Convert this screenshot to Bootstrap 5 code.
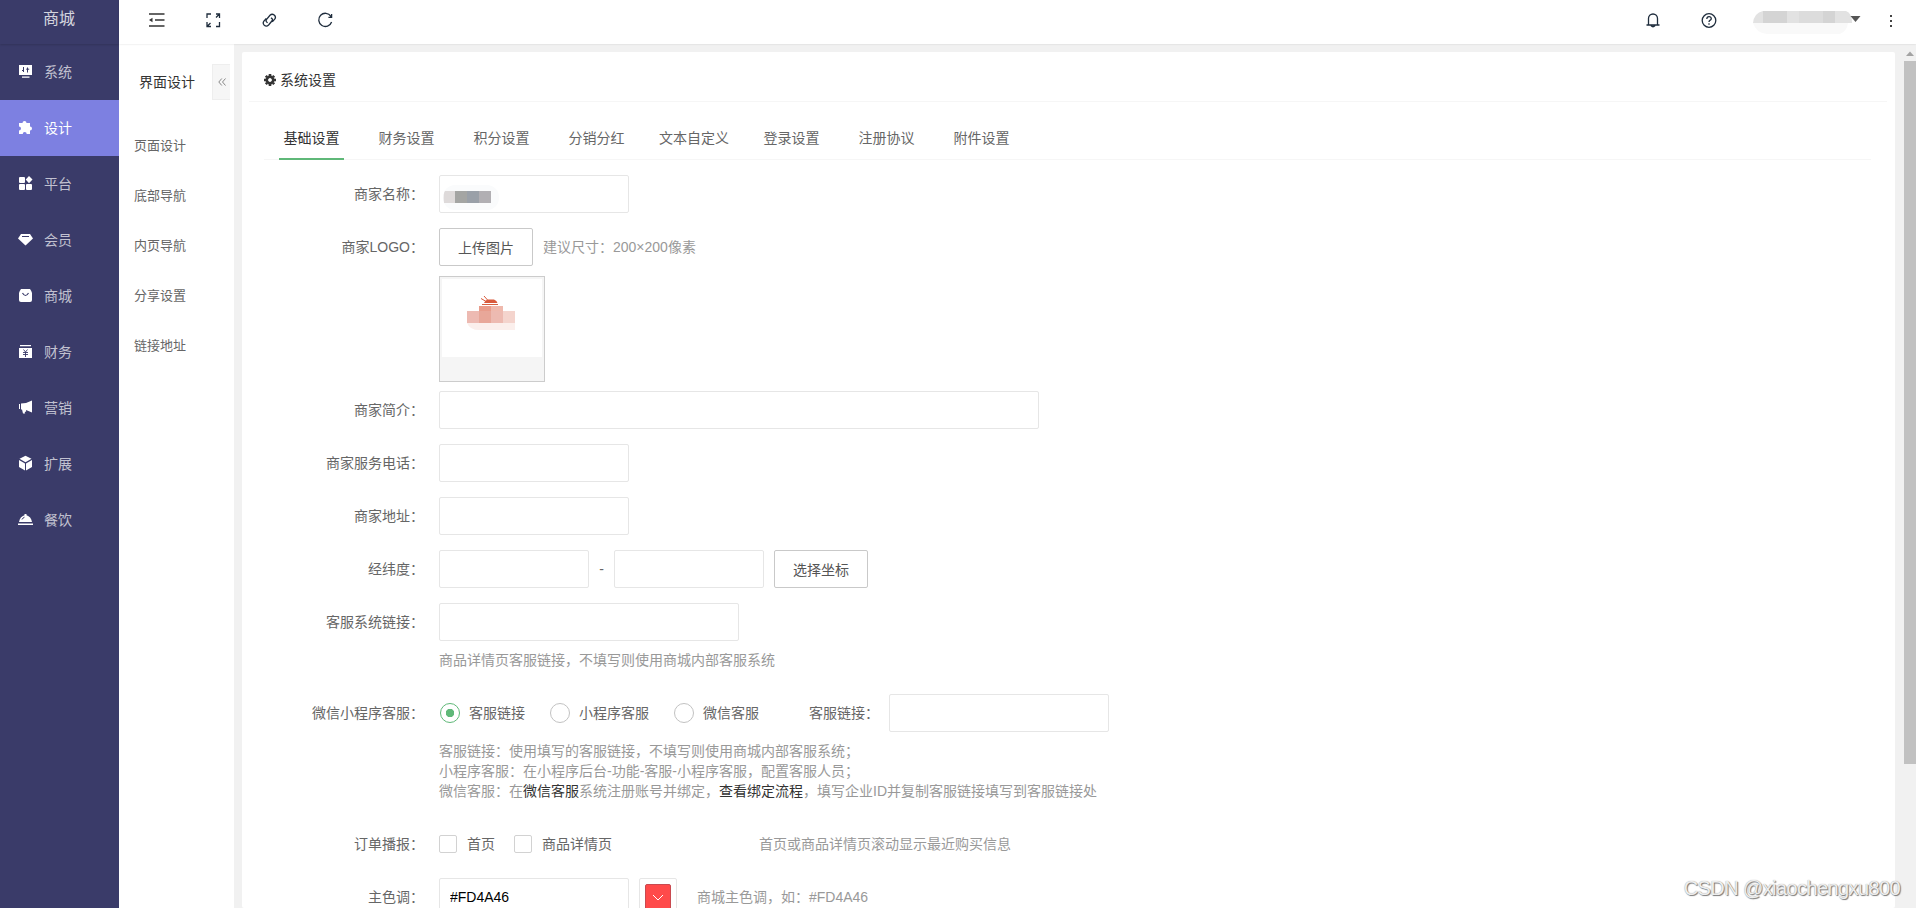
<!DOCTYPE html>
<html lang="zh-CN">
<head>
<meta charset="utf-8">
<title>系统设置</title>
<link rel="stylesheet" href="https://cdn.jsdelivr.net/npm/bootstrap@5.3.0/dist/css/bootstrap.min.css">
<style>
body{font:14px/20px "Liberation Sans","Noto Sans CJK SC",sans-serif;color:#666;background:#f1f1f1;height:908px;overflow:hidden}
.side{width:119px;background:#3a3b69;color:rgba(255,255,255,.7)}
.brand{height:44px;font-size:16px;line-height:38px;color:rgba(255,255,255,.8);box-shadow:0 1px 2px rgba(0,0,0,.15);text-align:center;padding-right:1px}
.side .nav-link{height:56px;padding:0 0 1px 18px;color:inherit;gap:10px}
.side .nav-link.active{background:#7d80e1;color:#fff}
.side svg{width:16px;height:16px;margin-top:-1px;fill:#fff;color:#3a3b69}
.topbar{height:45px;background:#fff;box-shadow:0 0 2px rgba(0,0,0,.14);padding:0 19px 15px 30px;z-index:2}
.topbar svg{display:block;fill:none;stroke:#1f2d3d;stroke-width:1.3}
.tools{gap:40px}
.sub{width:115px;background:#fff;padding-top:20px;font-size:13px}
.sub-head{height:36px;padding-left:20px;font-size:14px;color:#333}
.fold{width:18px;height:36px;background:#f6f6f6;border:1px solid #eee;border-right:0}
.sub .nav{margin-top:21px}
.sub .nav-link{height:50px;padding:0 0 0 15px;color:#666}
.gutter{padding:8px 9px 0 8px}
.panel{background:#fff;border-radius:2px;overflow:hidden}
.panel-head{height:50px;margin:0 8px 0 7px;padding:6px 0 0 15px;border-bottom:1px solid #f6f6f6;color:#333;gap:4px}
.tabs{height:41px;margin:17px 24px 15px 22px;border-bottom:1px solid #f6f6f6}
.tabs .nav-link{height:41px;padding:9px 0 0;margin:0 15px;min-width:65px;color:#666;text-align:center;border-bottom:2px solid transparent}
.tabs .nav-link.active{color:#333;border-color:#5fb878}
.line{height:38px;margin-bottom:15px}
.lab{width:197px;padding-right:15px;text-align:right;flex:none;height:38px;line-height:38px}
.inp{height:38px;border:1px solid #e6e6e6;border-radius:2px;padding:0 10px;font-size:14px;color:#000;width:190px;flex:none;background:#fff}
.w150{width:150px}.w220{width:220px}.w300{width:300px}.w600{width:600px}
.pick{width:94px;height:38px;border:1px solid #c9c9c9;border-radius:2px;padding:2px 0 0;font-size:14px;color:#555;flex:none}
.tip{color:#999}
.indent{margin-left:197px;padding:9px 0 24px}
.thumb{width:106px;height:106px;border:1px solid #ccc;background:#f5f5f5;padding:2px;margin:-5px 0 9px 197px}
.thumb svg{display:block;background:#fff}
.dot{width:20px;height:20px;border:1.5px solid #c2c2c2;border-radius:50%;margin:0 9px 0 25px}
.dot.on{margin-left:1px;border-color:#5fb878;background:radial-gradient(circle,#5fb878 0 4px,transparent 4.5px)}
.box{width:18px;height:18px;border:1px solid #d2d2d2;border-radius:2px;margin-right:10px}
.hl{color:#333}
.inner-lab{width:130px;text-align:right;padding-right:10px}
.swatch{width:38px;height:38px;border:1px solid #e6e6e6;border-radius:2px;padding:5px;margin:0 20px 0 10px}
.swatch svg{display:block;background:#ff4a4a;border:1px solid #c84a50;border-radius:2px}
.rail{width:12px;background:#f1f1f1;padding-top:7px}
.rail div{height:703px;margin-top:5px;background:#c1c1c1}
.stamp{right:16px;bottom:8px;font:20px/24px "Liberation Sans",sans-serif;letter-spacing:-.6px;color:#eee;text-shadow:1px 1px 1px #777,0 0 1px #999;z-index:5}
</style>
</head>
<body class="d-flex">
<aside class="side flex-shrink-0">
  <div class="brand">商城</div>
  <nav class="nav flex-column flex-nowrap">
    <a class="nav-link d-flex align-items-center"><svg viewBox="0 0 16 16"><path d="M1 2h13v10H1zM4 13.500h7.500v1.200H4z"/><path d="M5.500 4v5M4 7.500h2M9.500 4.500v5M8.200 6.200h3" stroke="currentColor" fill="none"/></svg>系统</a>
    <a class="nav-link d-flex align-items-center active"><svg viewBox="0 0 16 16"><path d="M1 4h3.500a2 2 0 1 1 4 0H12v3.500a2 2 0 1 1 0 4V15H8.700a2 2 0 0 0-4 0H1v-3.500a2 2 0 0 0 0-4z"/></svg>设计</a>
    <a class="nav-link d-flex align-items-center"><svg viewBox="0 0 16 16"><rect x="1" y="2" width="6" height="6" rx="1"/><path d="m11 1 3.500 3.500L11 8.200 7.700 4.600z"/><rect x="1" y="9" width="6" height="6" rx="1"/><rect x="8" y="9" width="6" height="6" rx="1"/></svg>平台</a>
    <a class="nav-link d-flex align-items-center"><svg viewBox="0 0 16 16"><path d="M3 3h9l3 4.500-7.500 7L0 7.500z"/><path d="M4 5.500h7" stroke="currentColor"/></svg>会员</a>
    <a class="nav-link d-flex align-items-center"><svg viewBox="0 0 16 16"><path d="M3 2h9q1.500 2 2 4v7q0 2-2 2H3q-2 0-2-2V6q.5-2 2-4z"/><path d="M4.500 6q3 5 6 0" stroke="currentColor" fill="none" stroke-width="1.200"/></svg>商城</a>
    <a class="nav-link d-flex align-items-center"><svg viewBox="0 0 16 16"><path d="M2 2h11v1.200H2zM1 5h13v10H1z"/><path d="m5.500 6.500 2 2.500 2-2.500M7.500 9v5M5 9.500h5M5 11.500h5" stroke="currentColor" fill="none" stroke-width=".9"/></svg>财务</a>
    <a class="nav-link d-flex align-items-center"><svg viewBox="0 0 16 16"><path d="M1 5h1v5H1zM3 4.500 8 4l6-2.500v12L8 11l.2 1.500-1.500.5.5 1.500H5L4 10.500H3z"/></svg>营销</a>
    <a class="nav-link d-flex align-items-center"><svg viewBox="0 0 16 16"><path d="m7.500.8 6 3-6 3.400-6-3.400zM1 5l6 3.500v7l-6-3.500zM14 5 8 8.500v7l6-3.500z"/></svg>扩展</a>
    <a class="nav-link d-flex align-items-center"><svg viewBox="0 0 16 16"><path d="M6.500 3h2v1.200Q13 5.500 14 11H1Q2 5.500 6.500 4.200zM0 12.500h15V14H0z"/><path d="M4 8.500q.8-1.700 2.500-2.300" stroke="currentColor" fill="none"/></svg>餐饮</a>
  </nav>
</aside>
<div class="flex-grow-1 d-flex flex-column">
  <header class="topbar d-flex align-items-end justify-content-between position-relative">
    <div class="tools d-flex align-items-center">
      <svg width="16" height="18" viewBox="0 0 16 18"><path d="M0 3h15.500M6 9h9.500M0 15h15.500" stroke="#333"/><path d="m0 9 3.500-2.300v4.600z" fill="#333" stroke="none"/></svg>
      <svg width="16" height="18" viewBox="0 0 16 18"><path d="M6 3H2v4M11 3h3.500v4M2 11v4.500h4M14.500 11v4.500H11M11 6.500 14.500 3M2 15.500 5.500 12"/></svg>
      <svg width="16" height="18" viewBox="0 0 16 18"><path d="M6.700 11.600q-2.500-.8-1.100-3.300l3.400-4q2-2 4.200-.3 2.200 2 .5 4.200l-2.400 2.700M9.900 6.800q2.500 1 1 3.200l-3.300 4q-2.200 2-4.300.2-2-1.900-.4-4.100l2.400-2.800"/></svg>
      <svg width="16" height="18" viewBox="0 0 16 18"><path d="M13.900 5.300A6.600 6.600 0 1 0 14.600 11M14.600 3v3.400h-3.200"/></svg>
    </div>
    <div class="d-flex align-items-center">
      <svg width="14" height="18" viewBox="0 0 14 18" style="margin-right:41px"><path d="M.5 14h13M2.500 14V7.500a4.500 4.500 0 0 1 9 0V14M5 14.500q2 2.500 4 0"/></svg>
      <svg width="16" height="18" viewBox="0 0 16 18" style="margin-right:36px"><circle cx="8" cy="9.500" r="6.800"/><path d="M5.800 8q.1-2.300 2.200-2.300T10.300 7.700q0 1-1.400 1.700-.9.500-.9 1.600M8 12.200v1.500"/></svg>
      <svg width="108" height="24" viewBox="0 0 108 24" style="margin:0 28px -6px 0"><g stroke="none"><path d="M10 0h83q6 2 6 12H0Q1 2 10 0z" fill="#e2e2e2"/><path d="M10 0h24v12H10zM70 0h12v12H70z" fill="#d4d4d4"/><path d="M46 0h12v12H46zM58 0h12v12H58z" fill="#dcdcdc"/><path d="M0 12h95q-1 8-8 11H14Q3 22 0 12z" fill="#f9f9f9"/><path d="M97.500 5h10l-5 6z" fill="#555"/></g></svg>
      <svg width="4" height="18" viewBox="0 0 4 18" style="margin-right:4px"><path d="M1 4h2v2H1zM1 9h2v2H1zM1 14h2v2H1z" fill="#444" stroke="none"/></svg>
    </div>
  </header>
  <div class="d-flex flex-grow-1" style="min-height:0">
    <aside class="sub flex-shrink-0">
      <div class="sub-head d-flex align-items-center">界面设计<span class="fold ms-auto me-1 d-flex align-items-center justify-content-center"><svg width="8" height="8" fill="none" stroke="#888"><path d="M3.800.5.800 4l3 3.500M7.500.5l-3 3.500 3 3.500"/></svg></span></div>
      <nav class="nav flex-column">
        <a class="nav-link d-flex align-items-center">页面设计</a><a class="nav-link d-flex align-items-center">底部导航</a><a class="nav-link d-flex align-items-center">内页导航</a><a class="nav-link d-flex align-items-center">分享设置</a><a class="nav-link d-flex align-items-center">链接地址</a>
      </nav>
    </aside>
    <main class="gutter flex-grow-1 d-flex">
      <div class="panel flex-grow-1">
        <div class="panel-head d-flex align-items-center"><svg width="12" height="12" viewBox="-6 -6 12 12"><circle r="3.200" fill="none" stroke="#333" stroke-width="2.600"/><path d="M0-6v2M0 4v2M-6 0h2M4 0h2M-4.200-4.200l1.300 1.300M4.200 4.200 2.900 2.900M-4.200 4.200l1.300-1.300M4.200-4.200 2.900-2.900" stroke="#333" stroke-width="2.600"/></svg>系统设置</div>
        <nav class="tabs nav flex-nowrap">
          <a class="nav-link active">基础设置</a><a class="nav-link">财务设置</a><a class="nav-link">积分设置</a><a class="nav-link">分销分红</a><a class="nav-link">文本自定义</a><a class="nav-link">登录设置</a><a class="nav-link">注册协议</a><a class="nav-link">附件设置</a>
        </nav>
        <form>
          <div class="line d-flex"><label class="lab">商家名称：</label><div class="inp d-flex align-items-center p-0"><svg width="60" height="26" style="margin:8px 0 0 3px"><rect width="56" height="25" rx="12" fill="#fafbfc"/><path d="M2 6h10v12H1Q0 8 2 6z" fill="#dedada"/><path d="M12 6h12v12H12z" fill="#a4a5a3"/><path d="M24 6h12v12H24z" fill="#9aa0a8"/><path d="M36 6h12v12H36z" fill="#b1afb3"/></svg></div></div>
          <div class="line d-flex"><label class="lab">商家LOGO：</label><button type="button" class="pick btn">上传图片</button><span class="tip align-self-center" style="margin-left:10px">建议尺寸：200×200像素</span></div>
          <div class="thumb"><svg width="100" height="78"><path d="M42 24q2-4 5-3.500h5q3 1 3.500 3.500z" fill="#d95a3c"/><path d="m39 19.500 6 3.500M42 17l4 4.500" stroke="#d95a3c"/><path d="M40 25.500h16" stroke="#d8603f"/><path d="M37 27h12v5H37z" fill="#e89c8b"/><path d="M49 27h12v5H49z" fill="#efb9ad"/><path d="M25 32h12v12H25z" fill="#edbab2"/><path d="M37 32h12v12H37z" fill="#e8a799"/><path d="M49 32h12v12H49z" fill="#edbab1"/><path d="M61 32h12v12H61z" fill="#f4d4cd"/><path d="M25 44h48v7H40q-12 1-15-7z" fill="#fbefec"/></svg></div>
          <div class="line d-flex"><label class="lab">商家简介：</label><input class="inp w600"></div>
          <div class="line d-flex"><label class="lab">商家服务电话：</label><input class="inp"></div>
          <div class="line d-flex"><label class="lab">商家地址：</label><input class="inp"></div>
          <div class="line d-flex"><label class="lab">经纬度：</label><input class="inp w150"><span class="text-center align-self-center" style="width:25px">-</span><input class="inp w150"><button type="button" class="pick btn" style="margin-left:10px">选择坐标</button></div>
          <div class="line d-flex mb-0"><label class="lab">客服系统链接：</label><input class="inp w300"></div>
          <div class="tip indent">商品详情页客服链接，不填写则使用商城内部客服系统</div>
          <div class="line d-flex align-items-center mb-0"><label class="lab">微信小程序客服：</label><span class="dot on"></span>客服链接<span class="dot"></span>小程序客服<span class="dot"></span>微信客服<span class="inner-lab">客服链接：</span><input class="inp w220"></div>
          <div class="tip indent">客服链接：使用填写的客服链接，不填写则使用商城内部客服系统；<br>小程序客服：在小程序后台-功能-客服-小程序客服，配置客服人员；<br>微信客服：在<span class="hl">微信客服</span>系统注册账号并绑定，<span class="hl">查看绑定流程</span>，填写企业ID并复制客服链接填写到客服链接处</div>
          <div class="line d-flex align-items-center"><label class="lab">订单播报：</label><span class="box"></span>首页<span class="box" style="margin-left:19px"></span>商品详情页<span class="tip" style="margin-left:147px">首页或商品详情页滚动显示最近购买信息</span></div>
          <div class="line d-flex align-items-center"><label class="lab">主色调：</label><input class="inp" value="#FD4A46"><span class="swatch"><svg width="26" height="26" fill="none" stroke="#fff"><path d="m7 10 5 5 5-5"/></svg></span><span class="tip">商城主色调，如：#FD4A46</span></div>
        </form>
      </div>
    </main>
    <div class="rail"><svg class="d-block mx-auto" width="8" height="5"><path d="M0 5 4 .5 8 5z" fill="#a3a3a3"/></svg><div></div></div>
  </div>
</div>
<div class="stamp position-absolute">CSDN @xiaochengxu800</div>
<script src="https://cdn.jsdelivr.net/npm/bootstrap@5.3.0/dist/js/bootstrap.bundle.min.js"></script>
</body>
</html>
